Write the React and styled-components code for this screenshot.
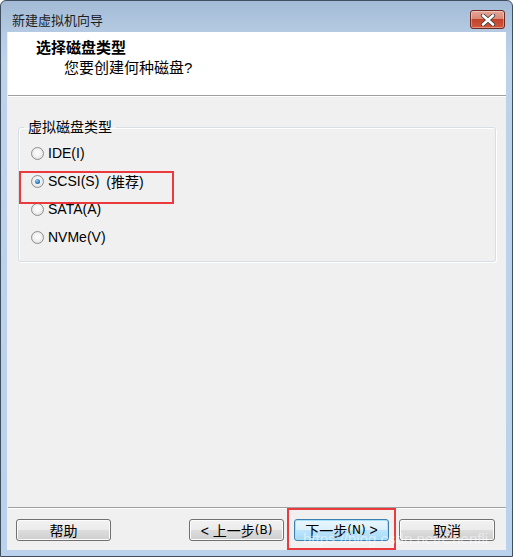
import React from 'react';
import styled, {createGlobalStyle} from 'styled-components';

const GlobalStyle = createGlobalStyle`
  html, body { margin: 0; padding: 0; background: #ffffff; }
  body { font-family: "Liberation Sans", "Noto Sans CJK SC", sans-serif; }
`;

const CJK = `"Liberation Sans", "Noto Sans CJK SC", sans-serif`;

const Window = styled.div`
  position: relative;
  width: 513px;
  height: 557px;
  box-sizing: border-box;
  border: 1px solid #3f4f60;
  border-radius: 6px 6px 0 0;
  background: linear-gradient(to bottom, #a3bbd6 0px, #b4cae2 30px, #bcd3ea 60px, #bad2eb 100%);
  display: flex;
  flex-direction: column;
  padding: 0 6px 6px 6px;
  overflow: hidden;
`;

const TitleBar = styled.div`
  height: 31px;
  display: flex;
  align-items: flex-start;
  justify-content: space-between;
  padding-left: 5px;
  font-family: ${CJK};
  font-size: 13px;
  color: #1e1e1e;
`;

const TitleText = styled.span`
  margin-top: 12px;
  line-height: 16px;
`;

const CloseBtn = styled.div`
  margin-top: 9px;
  margin-right: 1px;
  width: 33px;
  height: 17px;
  border: 1px solid #6b2a22;
  border-radius: 3px;
  background: linear-gradient(to bottom, #e6a595 0%, #d98a77 45%, #c2432c 50%, #cf5a3d 100%);
  box-shadow: inset 0 0 0 1px rgba(255,255,255,0.35);
  display: flex;
  align-items: center;
  justify-content: center;
`;

const Client = styled.div`
  flex: 1;
  display: flex;
  flex-direction: column;
  background: #f0f0f0;
  border-left: 1px solid #f0f0f0;
`;

const Header = styled.div`
  height: 64px;
  background: #ffffff;
  border-bottom: 1px solid #a0a0a0;
  box-shadow: 0 1px 0 #ffffff;
  padding: 7px 0 0 28px;
  box-sizing: border-box;
  font-family: ${CJK};
`;

const HeaderTitle = styled.div`
  font-size: 15px;
  font-weight: bold;
  line-height: 18px;
  color: #000;
`;

const HeaderSub = styled.div`
  font-size: 15px;
  line-height: 18px;
  padding-left: 28px;
  margin-top: 2px;
  color: #000;
`;

const Body = styled.div`
  flex: 1;
  padding: 23px 10px 0 10px;
`;

const Group = styled.fieldset`
  margin: 0;
  padding: 4px 0 12px 0;
  height: 143px;
  box-sizing: border-box;
  border: 1px solid #d5dfe5;
  border-radius: 3px;
  box-shadow: 1px 1px 0 #ffffff, inset 1px 1px 0 #ffffff;
`;

const Legend = styled.legend`
  margin-left: 5px;
  padding: 0 4px 0 4px;
  font-family: ${CJK};
  font-size: 14px;
  line-height: 16px;
  color: #000;
`;

const Row = styled.label`
  display: flex;
  align-items: center;
  height: 28px;
  padding-left: 12px;
  font-family: ${CJK};
  font-size: 14px;
  color: #000;
`;

const Radio = styled.span`
  width: 11px;
  height: 11px;
  border-radius: 50%;
  border: 1px solid #8e8f8f;
  background: radial-gradient(circle at 50% 45%, #ffffff 0%, #f4f4f4 40%, #d4d4d4 100%);
  margin-right: 4px;
  display: flex;
  align-items: center;
  justify-content: center;
  flex-shrink: 0;
`;

const Dot = styled.span`
  width: 5px;
  height: 5px;
  border-radius: 50%;
  background: radial-gradient(circle at 40% 35%, #9ad3f5 0%, #2a7ec4 55%, #0f3f70 100%);
`;

const Hint = styled.span`
  margin-left: 7px;
`;

const Footer = styled.div`
  border-top: 1px solid #a0a0a0;
  box-shadow: inset 0 1px 0 #ffffff;
  height: 43px;
  box-sizing: border-box;
  display: flex;
  align-items: flex-start;
  padding: 11px 10px 0 8px;
`;

const Button = styled.div`
  width: ${p => p.$w || 95}px;
  height: 22px;
  box-sizing: border-box;
  border: 1px solid ${p => (p.$primary ? '#3c7fb1' : '#707070')};
  border-radius: 3px;
  background: ${p => (p.$primary
    ? 'linear-gradient(to bottom, #eaf6fd 0%, #d9f0fc 50%, #bee6fd 50%, #a7d9f5 100%)'
    : 'linear-gradient(to bottom, #f2f2f2 0%, #ebebeb 50%, #dddddd 50%, #cfcfcf 100%)')};
  box-shadow: inset 0 0 0 1px ${p => (p.$primary ? '#a8e1fb' : '#fcfcfc')};
  display: flex;
  align-items: center;
  justify-content: center;
  font-family: ${CJK};
  font-size: 14px;
  color: #000;
  margin-left: ${p => p.$ml || 0}px;
`;

const Small = styled.span`
  font-size: 12px;
  font-family: "DejaVu Sans", sans-serif;
`;

const Spacer = styled.div`
  flex: 1;
`;

const Mark = styled.div`
  position: absolute;
  border: 2px solid #ea3a3d;
  box-sizing: border-box;
  pointer-events: none;
`;

const Watermark = styled.div`
  position: absolute;
  left: 302px;
  top: 529px;
  font-family: "Liberation Sans", sans-serif;
  font-size: 15px;
  line-height: 17px;
  color: rgba(255,255,255,0.5);
  pointer-events: none;
`;

const options = [
  {label: 'IDE(I)'},
  {label: 'SCSI(S)', checked: true, hint: '(推荐)'},
  {label: 'SATA(A)'},
  {label: 'NVMe(V)'},
];

export default function App() {
  return (
    <>
      <GlobalStyle/>
      <Window>
        <TitleBar>
          <TitleText>新建虚拟机向导</TitleText>
          <CloseBtn>
            <svg width="16" height="12" viewBox="0 0 16 12">
              <path d="M3 1.5 L13 10.5 M13 1.5 L3 10.5" stroke="#3a3a3a" strokeWidth="4.2" strokeLinecap="round"/>
              <path d="M3 1.5 L13 10.5 M13 1.5 L3 10.5" stroke="#ffffff" strokeWidth="2.6" strokeLinecap="round"/>
            </svg>
          </CloseBtn>
        </TitleBar>
        <Client>
          <Header>
            <HeaderTitle>选择磁盘类型</HeaderTitle>
            <HeaderSub>您要创建何种磁盘?</HeaderSub>
          </Header>
          <Body>
            <Group>
              <Legend>虚拟磁盘类型</Legend>
              {options.map(o => (
                <Row key={o.label}>
                  <Radio>{o.checked && <Dot/>}</Radio>
                  {o.label}
                  {o.hint && <Hint>{o.hint}</Hint>}
                </Row>
              ))}
            </Group>
          </Body>
          <Spacer/>
          <Footer>
            <Button>帮助</Button>
            <Button $ml={78}>&lt; 上一步<Small>(B)</Small></Button>
            <Button $primary $ml={10}>下一步<Small>(N)</Small>&nbsp;&gt;</Button>
            <Button $ml={10} $w={96}>取消</Button>
          </Footer>
        </Client>
        <Mark style={{left: 18, top: 170, width: 155, height: 33}}/>
        <Mark style={{left: 286, top: 507, width: 109, height: 42}}/>
        <Watermark>https://blog.csdn.net/Chenfli</Watermark>
      </Window>
    </>
  );
}
